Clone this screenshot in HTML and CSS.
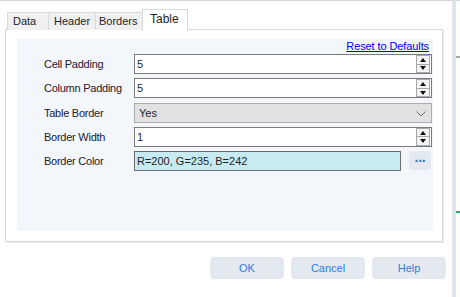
FILE: index.html
```html
<!DOCTYPE html>
<html lang="en">
<head>
    <meta charset="UTF-8">
    <meta name="viewport" content="width=device-width, initial-scale=1.0">
    <title>Table Options</title>
    <link rel="stylesheet" href="styles.css">
</head>
<body>
    <div class="window">
        <div class="dialog">
            <div class="tabs">
                <div class="tab tab-data">Data</div>
                <div class="tab tab-header">Header</div>
                <div class="tab tab-borders">Borders</div>
                <div class="tab tab-table active">Table</div>
            </div>
            <div class="panel">
                <div class="form">
                    <div class="reset-row"><a href="#" class="reset">Reset to Defaults</a></div>
                    <div class="rows">
                        <label class="label">Cell Padding</label>
                        <div class="field spin">
                            <span class="value">5</span>
                            <div class="spinner">
                                <span class="spin-btn up"></span>
                                <span class="spin-btn down"></span>
                            </div>
                        </div>

                        <label class="label">Column Padding</label>
                        <div class="field spin">
                            <span class="value">5</span>
                            <div class="spinner">
                                <span class="spin-btn up"></span>
                                <span class="spin-btn down"></span>
                            </div>
                        </div>

                        <label class="label">Table Border</label>
                        <div class="field select">
                            <span class="value">Yes</span>
                            <svg class="chevron" width="10" height="6" viewBox="0 0 10 6">
                                <polyline points="0.5,0.5 5,5 9.5,0.5" fill="none" stroke="#6b6b6b" stroke-width="1"/>
                            </svg>
                        </div>

                        <label class="label">Border Width</label>
                        <div class="field spin">
                            <span class="value">1</span>
                            <div class="spinner">
                                <span class="spin-btn up"></span>
                                <span class="spin-btn down"></span>
                            </div>
                        </div>

                        <label class="label">Border Color</label>
                        <div class="color-row">
                            <div class="field color">
                                <span class="value">R=200, G=235, B=242</span>
                            </div>
                            <button class="dots">&middot;&middot;&middot;</button>
                        </div>
                    </div>
                </div>
            </div>
            <div class="buttons">
                <button class="btn">OK</button>
                <button class="btn">Cancel</button>
                <button class="btn">Help</button>
            </div>
        </div>
        <div class="side">
            <span class="tick gray"></span>
            <span class="tick green"></span>
        </div>
    </div>
</body>
</html>
```

FILE: styles.css
```css
body {
    margin: 0;
    background-color: #ffffff;
    font-family: "Liberation Sans", Arial, sans-serif;
    font-size: 11px;
    color: #1f1f1f;
    overflow: hidden;
}
.window {
    display: flex;
    height: 297px;
}
.dialog {
    width: 452px;
    border-top: 1px solid #d4d4d4;
    border-right: 4px solid #dfe4ec;
    box-sizing: content-box;
    padding-left: 5px;
    box-sizing: border-box;
    width: 456px;
}
.tabs {
    display: flex;
    align-items: flex-end;
    height: 21px;
    margin-top: 8px;
    padding-left: 2px;
    position: relative;
    z-index: 1;
}
.tab {
    height: 18px;
    box-sizing: border-box;
    background-color: #f0f0f0;
    border: 1px solid #d9d9d9;
    border-bottom: none;
    font-size: 11px;
    line-height: 17px;
    padding-left: 5px;
    margin-right: -1px;
}
.tab-data { width: 42px; }
.tab-header { width: 48px; }
.tab-borders { width: 48px; padding-left: 3px; }
.tab-table { width: 46px; }
.tab.active {
    height: 22px;
    background-color: #ffffff;
    margin-bottom: -1px;
    padding-left: 7px;
    line-height: 19px;
    font-size: 12px;
}
.panel {
    width: 438px;
    height: 213px;
    box-sizing: border-box;
    border: 1px solid #d9d9d9;
    box-shadow: 1px 1px 0 #ececec;
    padding: 9px 9px 10px 11px;
    margin-top: -1px;
}
.form {
    height: 192px;
    background-color: #f3f6fb;
    padding-right: 1px;
}
.reset-row {
    display: flex;
    justify-content: flex-end;
    height: 15px;
    padding-top: 0px;
    padding-right: 3px;
}
.reset {
    color: #0000e6;
    font-size: 11px;
    line-height: 13px;
    margin-top: 1px;
    letter-spacing: -0.1px;
}
.rows {
    display: grid;
    grid-template-columns: 117px 1fr;
    grid-auto-rows: 20px;
    row-gap: 4.25px;
}
.label {
    padding-left: 27px;
    line-height: 20px;
    font-size: 11px;
    letter-spacing: -0.25px;
    color: #202030;
}
.field {
    position: relative;
    box-sizing: border-box;
    height: 20px;
    border: 1px solid #7a7a7a;
    background-color: #ffffff;
    display: flex;
    align-items: center;
    font-size: 11px;
}
.field .value {
    padding-left: 2px;
}
.spinner {
    position: absolute;
    right: 1px;
    top: 0px;
    width: 14px;
    height: 18px;
    display: flex;
    flex-direction: column;
}
.spin-btn {
    flex: 1;
    box-sizing: border-box;
    border: 1px solid #a8a8a8;
    background-color: #f4f4f4;
    display: flex;
    align-items: center;
    justify-content: center;
}
.spin-btn.down {
    border-top: none;
}
.spin-btn.up::after {
    content: "";
    border-left: 3.5px solid transparent;
    border-right: 3.5px solid transparent;
    border-bottom: 4px solid #111111;
}
.spin-btn.down::after {
    content: "";
    border-left: 3.5px solid transparent;
    border-right: 3.5px solid transparent;
    border-top: 4px solid #111111;
}
.field.select {
    background-color: #e1e1e1;
    border-color: #adadad;
}
.field.select .value {
    padding-left: 4px;
}
.chevron {
    position: absolute;
    right: 5px;
    top: 7px;
}
.color-row {
    display: flex;
    gap: 8px;
}
.field.color {
    width: 267px;
    height: 20px;
    background-color: #c8ebf2;
    border-color: #6e6e6e;
}
.dots {
    width: 22px;
    height: 19px;
    border: none;
    border-radius: 3px;
    background-color: #e4e9f0;
    color: #2f7be0;
    font-size: 14px;
    font-weight: bold;
    line-height: 10px;
    padding: 0;
    letter-spacing: -1px;
    font-family: "Liberation Sans", Arial, sans-serif;
}
.buttons {
    display: flex;
    gap: 7px;
    margin-top: 15px;
    padding-left: 205px;
}
.btn {
    width: 74px;
    height: 22px;
    border: none;
    border-radius: 4px;
    background-color: #e4e9f0;
    color: #3279de;
    font-family: "Liberation Sans", Arial, sans-serif;
    font-size: 11px;
    padding: 0;
}
.side {
    width: 4px;
    border-top: 1px solid #d4d4d4;
    display: flex;
    flex-direction: column;
}
.tick {
    display: block;
    width: 4px;
    height: 2px;
}
.tick.gray {
    background-color: #a8a8a8;
    margin-top: 55px;
}
.tick.green {
    background-color: #3aa66a;
    margin-top: 153px;
}
```
